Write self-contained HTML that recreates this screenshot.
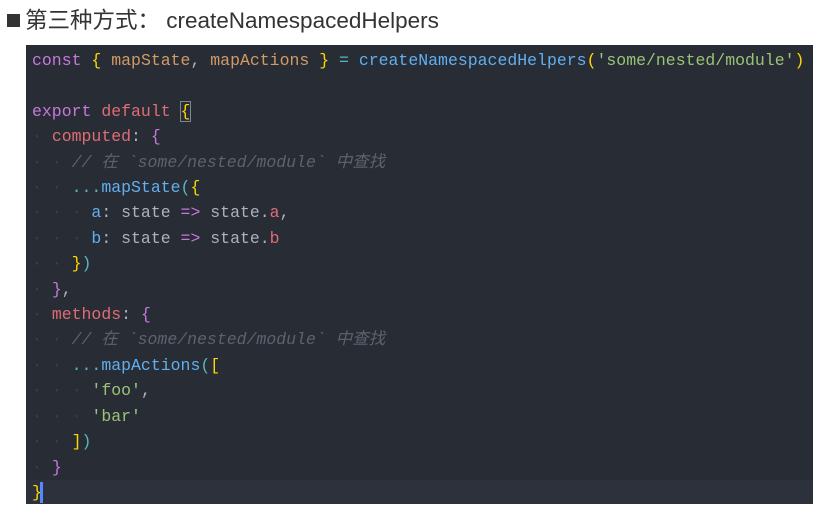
<!DOCTYPE html>
<html><head><meta charset="utf-8"><style>
body{margin:0;width:813px;height:504px;background:#fff;overflow:hidden;position:relative;font-family:"Liberation Sans","Noto Sans CJK SC",sans-serif}
.title{position:absolute;left:7px;top:3px;font-size:22.5px;color:#333;white-space:nowrap}
.title .sq{display:inline-block;width:13px;height:13px;background:#333;margin-right:5px;vertical-align:1px}
.code{position:absolute;left:26px;top:45px;width:787px;height:459px;background:#282c34}
.hl{position:absolute;left:0;top:435px;width:787px;height:24px;background:#2c313c}
.cur{position:absolute;left:14px;top:437px;width:3px;height:21px;background:#528bff}
pre{margin:0;position:absolute;left:6px;top:3px;font-family:"Liberation Mono","Noto Sans CJK SC",monospace;font-size:16.5px;line-height:25.4px;color:#abb2bf}
.k{color:#c678dd}.r{color:#e06c75}.y{color:#e5c07b}.o{color:#d19a66}.b{color:#61afef}.c{color:#56b6c2}.g{color:#98c379}.cm{color:#5c6370;font-style:italic}.d{color:#3b4048}.p{color:#c678dd}.gb{color:#ffd700}
.box{outline:1px solid #7f848e}
</style></head><body>
<div class="title"><span class="sq"></span>第三种方式： createNamespacedHelpers</div>
<div class="code">
<div class="hl"></div><div class="cur"></div>
<pre><span class="k">const</span> <span class="gb">{</span> <span class="o">mapState</span>, <span class="o">mapActions</span> <span class="gb">}</span> <span class="c">=</span> <span class="b">createNamespacedHelpers</span><span class="gb">(</span><span class="g">'some/nested/module'</span><span class="gb">)</span>

<span class="k">export</span> <span class="r">default</span> <span class="gb box">{</span>
<span class="d">·</span> <span class="r">computed</span>: <span class="p">{</span>
<span class="d">· · </span><span class="cm">// 在 `some/nested/module` 中查找</span>
<span class="d">· · </span><span class="c">...</span><span class="b">mapState</span><span class="c">(</span><span class="gb">{</span>
<span class="d">· · · </span><span class="b">a</span>: state <span class="k">=&gt;</span> state.<span class="r">a</span>,
<span class="d">· · · </span><span class="b">b</span>: state <span class="k">=&gt;</span> state.<span class="r">b</span>
<span class="d">· · </span><span class="gb">}</span><span class="c">)</span>
<span class="d">·</span> <span class="p">}</span>,
<span class="d">·</span> <span class="r">methods</span>: <span class="p">{</span>
<span class="d">· · </span><span class="cm">// 在 `some/nested/module` 中查找</span>
<span class="d">· · </span><span class="c">...</span><span class="b">mapActions</span><span class="c">(</span><span class="gb">[</span>
<span class="d">· · · </span><span class="g">'foo'</span>,
<span class="d">· · · </span><span class="g">'bar'</span>
<span class="d">· · </span><span class="gb">]</span><span class="c">)</span>
<span class="d">·</span> <span class="p">}</span>
<span class="gb">}</span></pre>
</div>
</body></html>
